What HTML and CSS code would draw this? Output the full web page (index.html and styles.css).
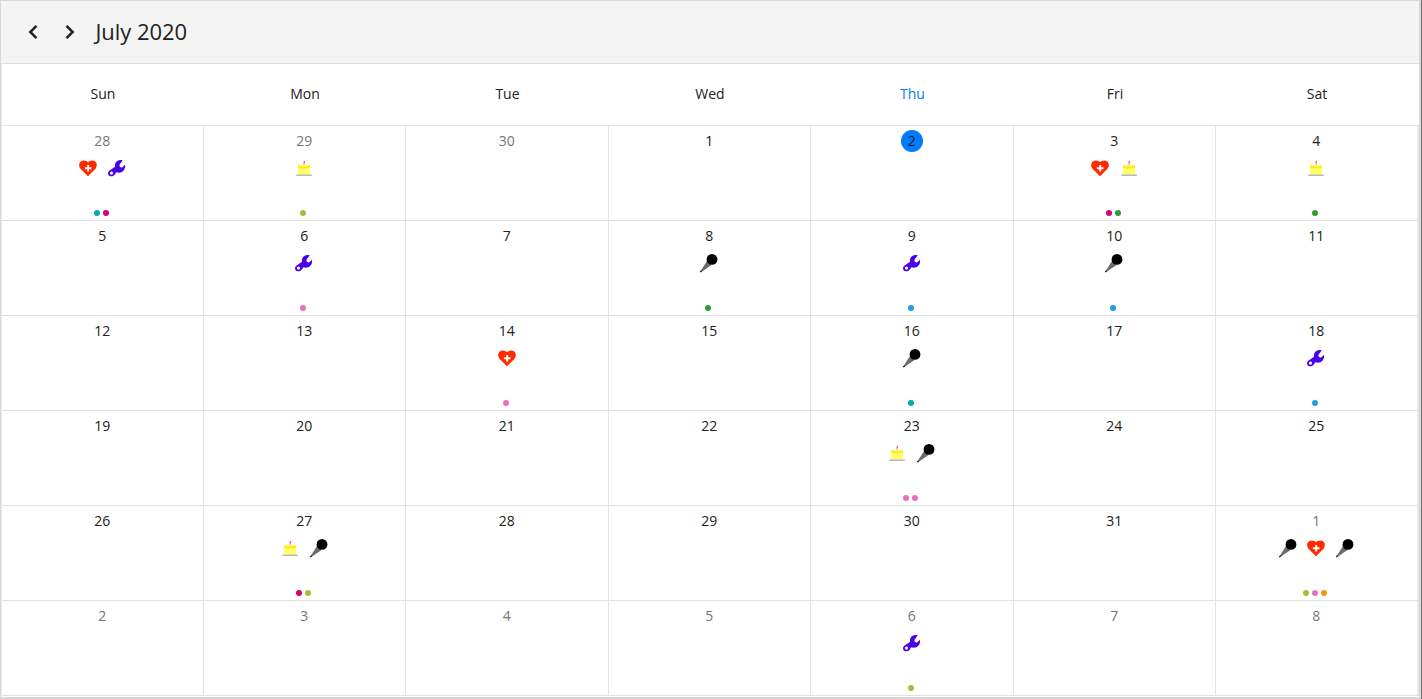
FILE: index.html
```
<!DOCTYPE html>
<html lang="en">
<head>
<meta charset="utf-8">
<title>July 2020</title>
<link rel="stylesheet" href="styles.css">
</head>
<body>
<svg class="defs" aria-hidden="true">
  <symbol id="heart" viewBox="0 0 20 20">
    <path fill="#ff2a00" d="M10 18.200 2.700 11C.6 8.700.7 4.900 3 3.300 5.300 1.700 8.500 2.400 10 4.300c1.500-1.900 4.700-2.600 7-1 2.300 1.600 2.400 5.400.3 7.700z"/>
    <path stroke="#fff" stroke-width="1.900" d="M10.200 7v6.600M6.900 10.300h6.600"/>
  </symbol>
  <symbol id="wrench" viewBox="0 0 20 20">
    <path fill="#4800e8" fill-rule="evenodd" d="M15.700 2.300c-3-1-6.500.3-7.400 3.200-.4 1.300-.5 2.300-.2 3.300L3 12.200c-2.400 1.400-2.500 4.200-.7 5.500 1.900 1.200 4.500.4 5.500-1.200l1.500-2.300c1.600.6 3.400.7 5 0 2.700-1 4.300-4 3.700-7.400l-2.700 2.500c-1.200.6-2.500 0-2.800-1.200-.2-1 .2-2 .9-2.700zM4.500 13.500a1.600 1.600 0 1 1 0 3.200 1.600 1.600 0 0 1 0-3.200z"/>
  </symbol>
  <symbol id="cake" viewBox="0 0 20 20">
    <path fill="#ffff66" d="M4 7.500h12v9H4z"/>
    <path fill="#ffe820" d="M4 7h12v2.500c-3 1.300-9 1.300-12 0z"/>
    <path fill="#ffff5c" d="M5 7h10v1.300H5z"/>
    <path stroke="#b4aaa5" stroke-width="1.300" d="M2.300 17.200h15.500"/>
    <path stroke="#f0a090" stroke-width="1.200" d="M10 7V5"/>
    <path stroke="#f05038" stroke-width="1.200" d="M10 5.200 10.500 3"/>
  </symbol>
  <symbol id="mic" viewBox="0 0 20 20">
    <path fill="#6c6c6c" d="M8.300 7.500 12.500 12 2 19.200 1.200 18.800z"/>
    <path stroke="#222" stroke-width="1.200" d="m1.200 19 1.500-1.400"/>
    <circle cx="13" cy="6.400" r="5.400"/>
  </symbol>
</svg>
<main class="calendar">
  <header class="toolbar">
    <button class="nav" aria-label="Previous"><svg viewBox="0 0 16 18"><path d="m11.500 2.800-6.200 6.200 6.200 6.200"/></svg></button>
    <button class="nav" aria-label="Next"><svg viewBox="0 0 16 18"><path d="m4.500 2.800 6.200 6.200-6.200 6.200"/></svg></button>
    <h1 class="title">July 2020</h1>
  </header>
  <div class="weekdays">
    <span>Sun</span><span>Mon</span><span>Tue</span><span>Wed</span><span class="current">Thu</span><span>Fri</span><span>Sat</span>
  </div>
  <div class="days" id="days"></div>
</main>
<script src="calendar.js"></script>
</body>
</html>
```
FILE: styles.css
```
* { box-sizing: border-box; }
body {
  margin: 0;
  width: 1422px;
  height: 699px;
  background: #fff;
  color: #212121;
  font-family: "Open Sans", "Noto Sans", sans-serif;
  font-size: 14px;
  border-right: 1px solid #747474;
  overflow: hidden;
}
.defs { display: none; }
.calendar {
  height: 699px;
  border: 1px solid #d8d8d8;
  border-right-width: 2px;
  border-bottom-width: 2px;
  display: flex;
  flex-direction: column;
  background: #fff;
}
.toolbar {
  height: 63px;
  background: #f4f4f4;
  border-bottom: 1px solid #dedede;
  display: flex;
  align-items: center;
  padding-left: 23.500px;
}
.nav {
  border: 0;
  padding: 0;
  background: none;
  width: 16px;
  height: 18px;
  margin-right: 21px;
}
.nav + .nav { margin-right: 18px; }
.nav svg { display: block; width: 16px; height: 18px; }
.nav path { fill: none; stroke: #212121; stroke-width: 2.5; }
.title {
  margin: 0 0 3px;
  font-size: 22px;
  line-height: 30px;
  font-weight: 400;
  letter-spacing: -0.05px;
}
.weekdays, .days {
  display: grid;
  grid-template-columns: 202px 202px 203px 202px 203px 202px 202px;
  border-left: 1px solid #ececec;
}
.weekdays {
  height: 62px;
  line-height: 60px;
  text-align: center;
  border-bottom: 1px solid #e4e4e4;
}
.current { color: #007aff; }
.days {
  grid-auto-rows: 95px;
  border-right: 2px solid #e8e8e8;
}
.day {
  border-right: 1px solid #e4e4e4;
  border-bottom: 1px solid #e0e0e0;
  display: flex;
  flex-direction: column;
  align-items: center;
  padding: 4px 0.500px 0 0;
}
.day:nth-child(7n) { border-right: 0; padding-right: 1.500px; }
.number {
  width: 22px;
  height: 22px;
  line-height: 22px;
  border-radius: 50%;
  text-align: center;
}
.outside .number { color: #757575; }
.today .number { background: #007aff; }
.icons {
  display: flex;
  gap: 8.700px;
  height: 20px;
  margin-top: 6px;
}
.icons svg { width: 20px; height: 20px; display: block; }
.dots {
  display: flex;
  gap: 2.800px;
  margin: 32px 2px 0 0;
}
.dot { width: 6px; height: 6px; border-radius: 50%; }
.teal { background: #00aba9; }
.magenta { background: #d80073; }
.lime { background: #a2c139; }
.green { background: #339933; }
.pink { background: #e671b8; }
.blue { background: #1ba1e2; }
.orange { background: #f09609; }
```
FILE: calendar.js
```
const events = {
  0: [['heart', 'wrench'], ['teal', 'magenta']],
  1: [['cake'], ['lime']],
  5: [['heart', 'cake'], ['magenta', 'green']],
  6: [['cake'], ['green']],
  8: [['wrench'], ['pink']],
  10: [['mic'], ['green']],
  11: [['wrench'], ['blue']],
  12: [['mic'], ['blue']],
  16: [['heart'], ['pink']],
  18: [['mic'], ['teal']],
  20: [['wrench'], ['blue']],
  25: [['cake', 'mic'], ['pink', 'pink']],
  29: [['cake', 'mic'], ['magenta', 'lime']],
  34: [['mic', 'heart', 'mic'], ['lime', 'pink', 'orange']],
  39: [['wrench'], ['lime']]
};
const first = new Date(2020, 5, 28);
let html = '';
for (let i = 0; i < 42; i++) {
  const date = new Date(first.getFullYear(), first.getMonth(), first.getDate() + i);
  const [icons, dots] = events[i] || [[], []];
  const state = date.getMonth() !== 6 ? ' outside' : date.getDate() === 2 ? ' today' : '';
  html += `<div class="day${state}"><span class="number">${date.getDate()}</span>
    <div class="icons">${icons.map(n => `<svg><use href="#${n}"/></svg>`).join('')}</div>
    <div class="dots">${dots.map(c => `<i class="dot ${c}"></i>`).join('')}</div></div>`;
}
document.getElementById('days').innerHTML = html;
```
